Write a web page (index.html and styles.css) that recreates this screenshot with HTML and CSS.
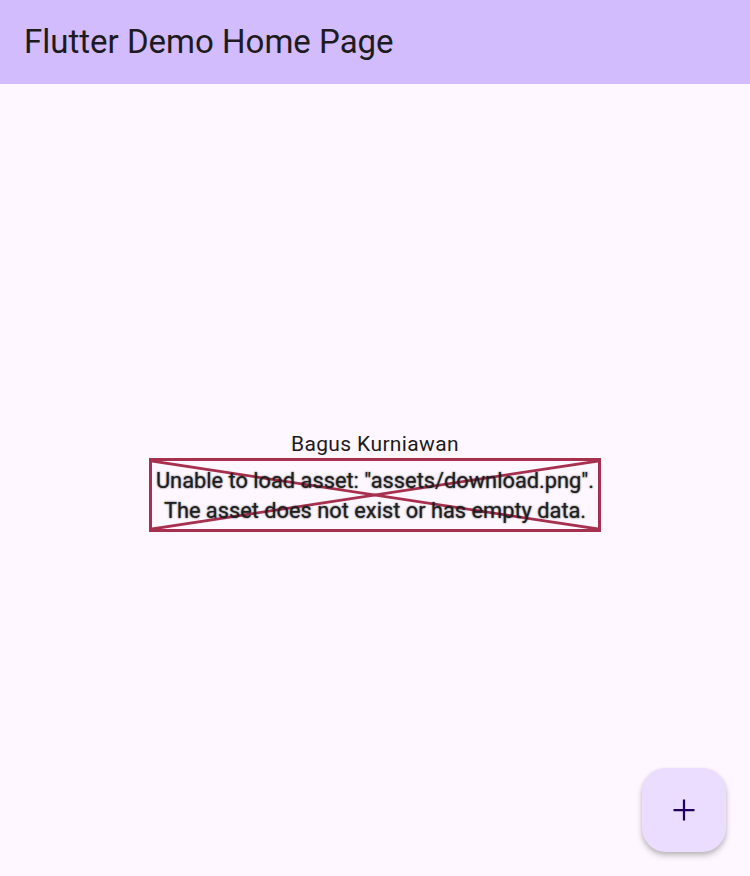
FILE: index.html
```html
<!DOCTYPE html>
<html>
<head>
<meta charset="utf-8">
<link rel="stylesheet" href="styles.css">
</head>
<body>
<div class="app">
  <header class="appbar"><h1 class="title">Flutter Demo Home Page</h1></header>
  <main class="body">
    <div class="column">
      <div class="name">Bagus Kurniawan</div>
      <div class="error-box">
        <svg class="cross" viewBox="0 0 452 74" preserveAspectRatio="none">
          <line x1="0" y1="0" x2="452" y2="74"/>
          <line x1="452" y1="0" x2="0" y2="74"/>
        </svg>
        <div class="error-text">Unable to load asset: "assets/download.png".<br>The asset does not exist or has empty data.</div>
      </div>
    </div>
  </main>
  <button class="fab" aria-label="Add">
    <svg viewBox="0 0 24 24" width="36" height="36"><path d="M19 12.75h-6.25V19h-1.5v-6.25H5v-1.5h6.25V5h1.5v6.25H19z" fill="#21005D"/></svg>
  </button>
</div>
</body>
</html>
```
FILE: styles.css
```css
* { box-sizing: border-box; }
html, body { margin: 0; padding: 0; }
body {
  width: 750px;
  height: 876px;
  overflow: hidden;
  font-family: Roboto, "Liberation Sans", sans-serif;
  background: #FEF7FF;
  color: #1D1B20;
}
.app {
  position: relative;
  width: 750px;
  height: 876px;
  display: flex;
  flex-direction: column;
}
.appbar {
  height: 84px;
  background: #D2BCFD;
  display: flex;
  align-items: center;
  padding-left: 24px;
  padding-bottom: 2px;
  flex: none;
}
.title {
  margin: 0;
  font-size: 33px;
  font-weight: 400;
  color: #1D1B20;
  letter-spacing: 0;
}
.body {
  flex: 1;
  display: flex;
  align-items: center;
  justify-content: center;
}
.column {
  display: flex;
  flex-direction: column;
  align-items: center;
  padding-top: 2px;
}
.name {
  font-size: 21px;
  line-height: 28px;
  letter-spacing: 0.375px;
  color: #1D1B20;
}
.error-box {
  position: relative;
  width: 452px;
  height: 74px;
  border: 3px solid #A8304F;
  display: flex;
  align-items: center;
  justify-content: center;
}
.cross {
  position: absolute;
  left: 0; top: 0;
  width: 100%; height: 100%;
}
.cross line {
  stroke: #A8304F;
  stroke-width: 3;
}
.error-text {
  position: relative;
  top: 1px;
  font-size: 21.8px;
  font-weight: 400;
  line-height: 30px;
  text-align: center;
  color: #1f1f1f;
  text-shadow: 0 0 2px rgba(0,0,0,0.75);
  white-space: nowrap;
}
.fab {
  position: absolute;
  right: 24px;
  bottom: 24px;
  width: 84px;
  height: 84px;
  border: none;
  border-radius: 24px;
  background: #EADDFF;
  box-shadow: 0 4px 6px rgba(0,0,0,0.18), 0 2px 4px rgba(0,0,0,0.12);
  display: flex;
  align-items: center;
  justify-content: center;
  padding: 0;
}
```
